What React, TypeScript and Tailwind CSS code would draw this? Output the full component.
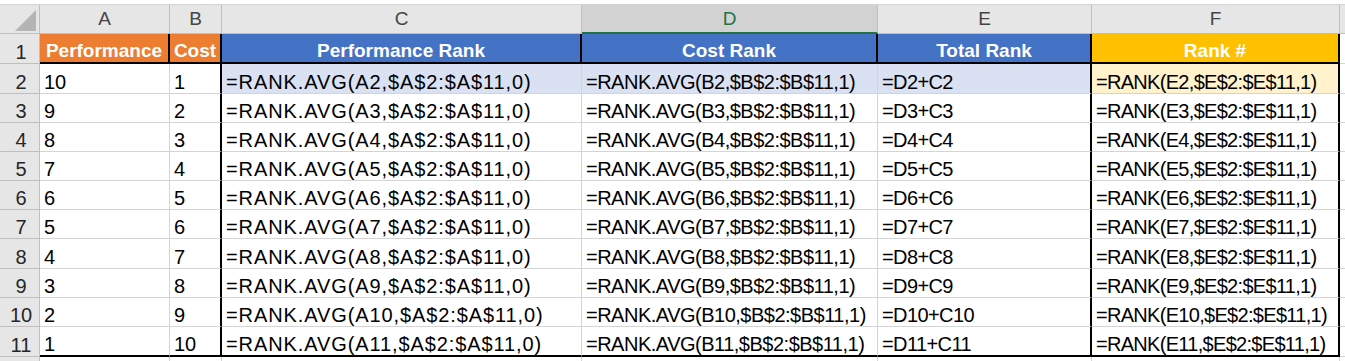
import React from 'react';

// column widths include each cell's right border
const COLS = [
  { key: 'A', w: 'w-[130px]', track: '' },
  { key: 'B', w: 'w-[52px]', track: '' },
  { key: 'C', w: 'w-[360px]', track: 'tracking-[0.9px]' },
  { key: 'D', w: 'w-[296px]', track: 'tracking-[-0.5px]' },
  { key: 'E', w: 'w-[214px]', track: 'tracking-[-0.6px]' },
  { key: 'F', w: 'w-[248px]', track: 'tracking-[-0.7px]' },
];

const HEIGHTS: Record<number, string> = {
  1: 'h-[30px]',
  2: 'h-[30px]',
  3: 'h-[29px]',
  4: 'h-[29px]',
  5: 'h-[29px]',
  6: 'h-[29px]',
  7: 'h-[29px]',
  8: 'h-[30px]',
  9: 'h-[29px]',
  10: 'h-[29px]',
  11: 'h-[30px]',
};

const rows = Array.from({ length: 10 }, (_, i) => {
  const r = i + 2;
  return {
    r,
    cells: [
      String(12 - r),
      String(r - 1),
      `=RANK.AVG(A${r},$A$2:$A$11,0)`,
      `=RANK.AVG(B${r},$B$2:$B$11,1)`,
      `=D${r}+C${r}`,
      `=RANK(E${r},$E$2:$E$11,1)`,
    ],
  };
});

function RowHeader({ n }: { n: number }) {
  return (
    <div className="w-[40px] shrink-0 flex items-end justify-center bg-[#e6e6e6] border-r border-b border-[#bfbfbf] text-[20px] leading-[22px] text-[#262626] pl-[3px]">
      {n}
    </div>
  );
}

export default function App() {
  return (
    <div className="w-[1345px] h-[361px] overflow-hidden bg-white font-['Liberation_Sans',Arial,sans-serif]">
      {/* strip above the headings */}
      <div className="h-[5px] border-b border-[#d4d4d4] bg-white" />

      {/* column letters */}
      <div className="flex h-[29px]">
        <div className="w-[40px] shrink-0 relative bg-[#e6e6e6] border-r border-b border-[#bfbfbf]">
          <svg className="absolute left-[15px] top-[5px]" width="21" height="21" viewBox="0 0 21 21">
            <polygon points="21,0 21,21 0,21" fill="#b4b4b4" />
          </svg>
        </div>
        {COLS.map((c) =>
          c.key === 'D' ? (
            <div
              key={c.key}
              className={`${c.w} shrink-0 flex items-end justify-center bg-[#d2d2d2] border-r border-[#bfbfbf] border-b-2 border-b-[#217346] text-[19px] leading-[22px] text-[#217346] pb-[2px]`}
            >
              {c.key}
            </div>
          ) : (
            <div
              key={c.key}
              className={`${c.w} shrink-0 flex items-end justify-center bg-[#e6e6e6] border-r border-b border-[#bfbfbf] text-[19px] leading-[22px] text-[#444444] pb-[3px]`}
            >
              {c.key}
            </div>
          )
        )}
        <div className="flex-1 bg-[#e6e6e6] border-b border-[#bfbfbf]" />
      </div>

      {/* row 1 — headings */}
      <div className={`flex ${HEIGHTS[1]}`}>
        <RowHeader n={1} />
        <div className="w-[130px] shrink-0 flex items-end justify-center bg-[#ed7d31] border-r-2 border-b-2 border-black text-white font-bold text-[19px] leading-[22px]">
          Performance
        </div>
        <div className="w-[52px] shrink-0 flex items-end justify-center bg-[#ed7d31] border-r-2 border-b-2 border-black text-white font-bold text-[19px] leading-[22px]">
          Cost
        </div>
        <div className="w-[360px] shrink-0 flex items-end justify-center bg-[#4472c4] border-r-2 border-b-2 border-black text-white font-bold text-[19px] leading-[22px]">
          Performance Rank
        </div>
        <div className="w-[296px] shrink-0 flex items-end justify-center bg-[#4472c4] border-r-2 border-b-2 border-black text-white font-bold text-[19px] leading-[22px]">
          Cost Rank
        </div>
        <div className="w-[214px] shrink-0 flex items-end justify-center bg-[#4472c4] border-r-2 border-b-2 border-black text-white font-bold text-[19px] leading-[22px]">
          Total Rank
        </div>
        <div className="w-[248px] shrink-0 flex items-end justify-center bg-[#ffc000] border-r-2 border-b-2 border-black text-white font-bold text-[19px] leading-[22px]">
          Rank #
        </div>
        <div className="flex-1 border-b border-[#d4d4d4]" />
      </div>

      {/* rows 2–11 */}
      {rows.map(({ r, cells }) => {
        const last = r === 11;
        const bottom = last ? 'border-b-2 border-b-black' : 'border-b border-b-[#d4d4d4]';
        return (
          <div key={r} className={`flex ${HEIGHTS[r]}`}>
            <RowHeader n={r} />
            {cells.map((text, ci) => {
              const thick = ci === 1 || ci === 4 || ci === 5;
              const right = thick ? 'border-r-2 border-r-black' : 'border-r border-r-[#d4d4d4]';
              let bg = 'bg-white';
              if (r === 2 && ci >= 2 && ci <= 4) bg = 'bg-[#d9e1f2]';
              if (r === 2 && ci === 5) bg = 'bg-[#fff2cc]';
              return (
                <div
                  key={ci}
                  className={`${COLS[ci].w} ${COLS[ci].track} shrink-0 flex items-end pl-[4px] whitespace-nowrap overflow-hidden text-[20px] leading-[22px] text-black ${bg} ${right} ${bottom}`}
                >
                  {text}
                </div>
              );
            })}
            <div className="flex-1 border-b border-[#d4d4d4]" />
          </div>
        );
      })}

      <div className="flex h-[4px]">
        <div className="w-[40px] shrink-0 bg-[#e6e6e6] border-r border-[#bfbfbf]" />
        <div className="w-[130px] shrink-0 border-r border-[#d4d4d4]" />
        <div className="w-[52px] shrink-0 border-r border-[#d4d4d4]" />
        <div className="w-[360px] shrink-0 border-r border-[#d4d4d4]" />
        <div className="w-[296px] shrink-0 border-r border-[#d4d4d4]" />
        <div className="w-[214px] shrink-0 border-r border-[#d4d4d4]" />
        <div className="w-[248px] shrink-0 border-r border-[#d4d4d4]" />
      </div>
    </div>
  );
}
